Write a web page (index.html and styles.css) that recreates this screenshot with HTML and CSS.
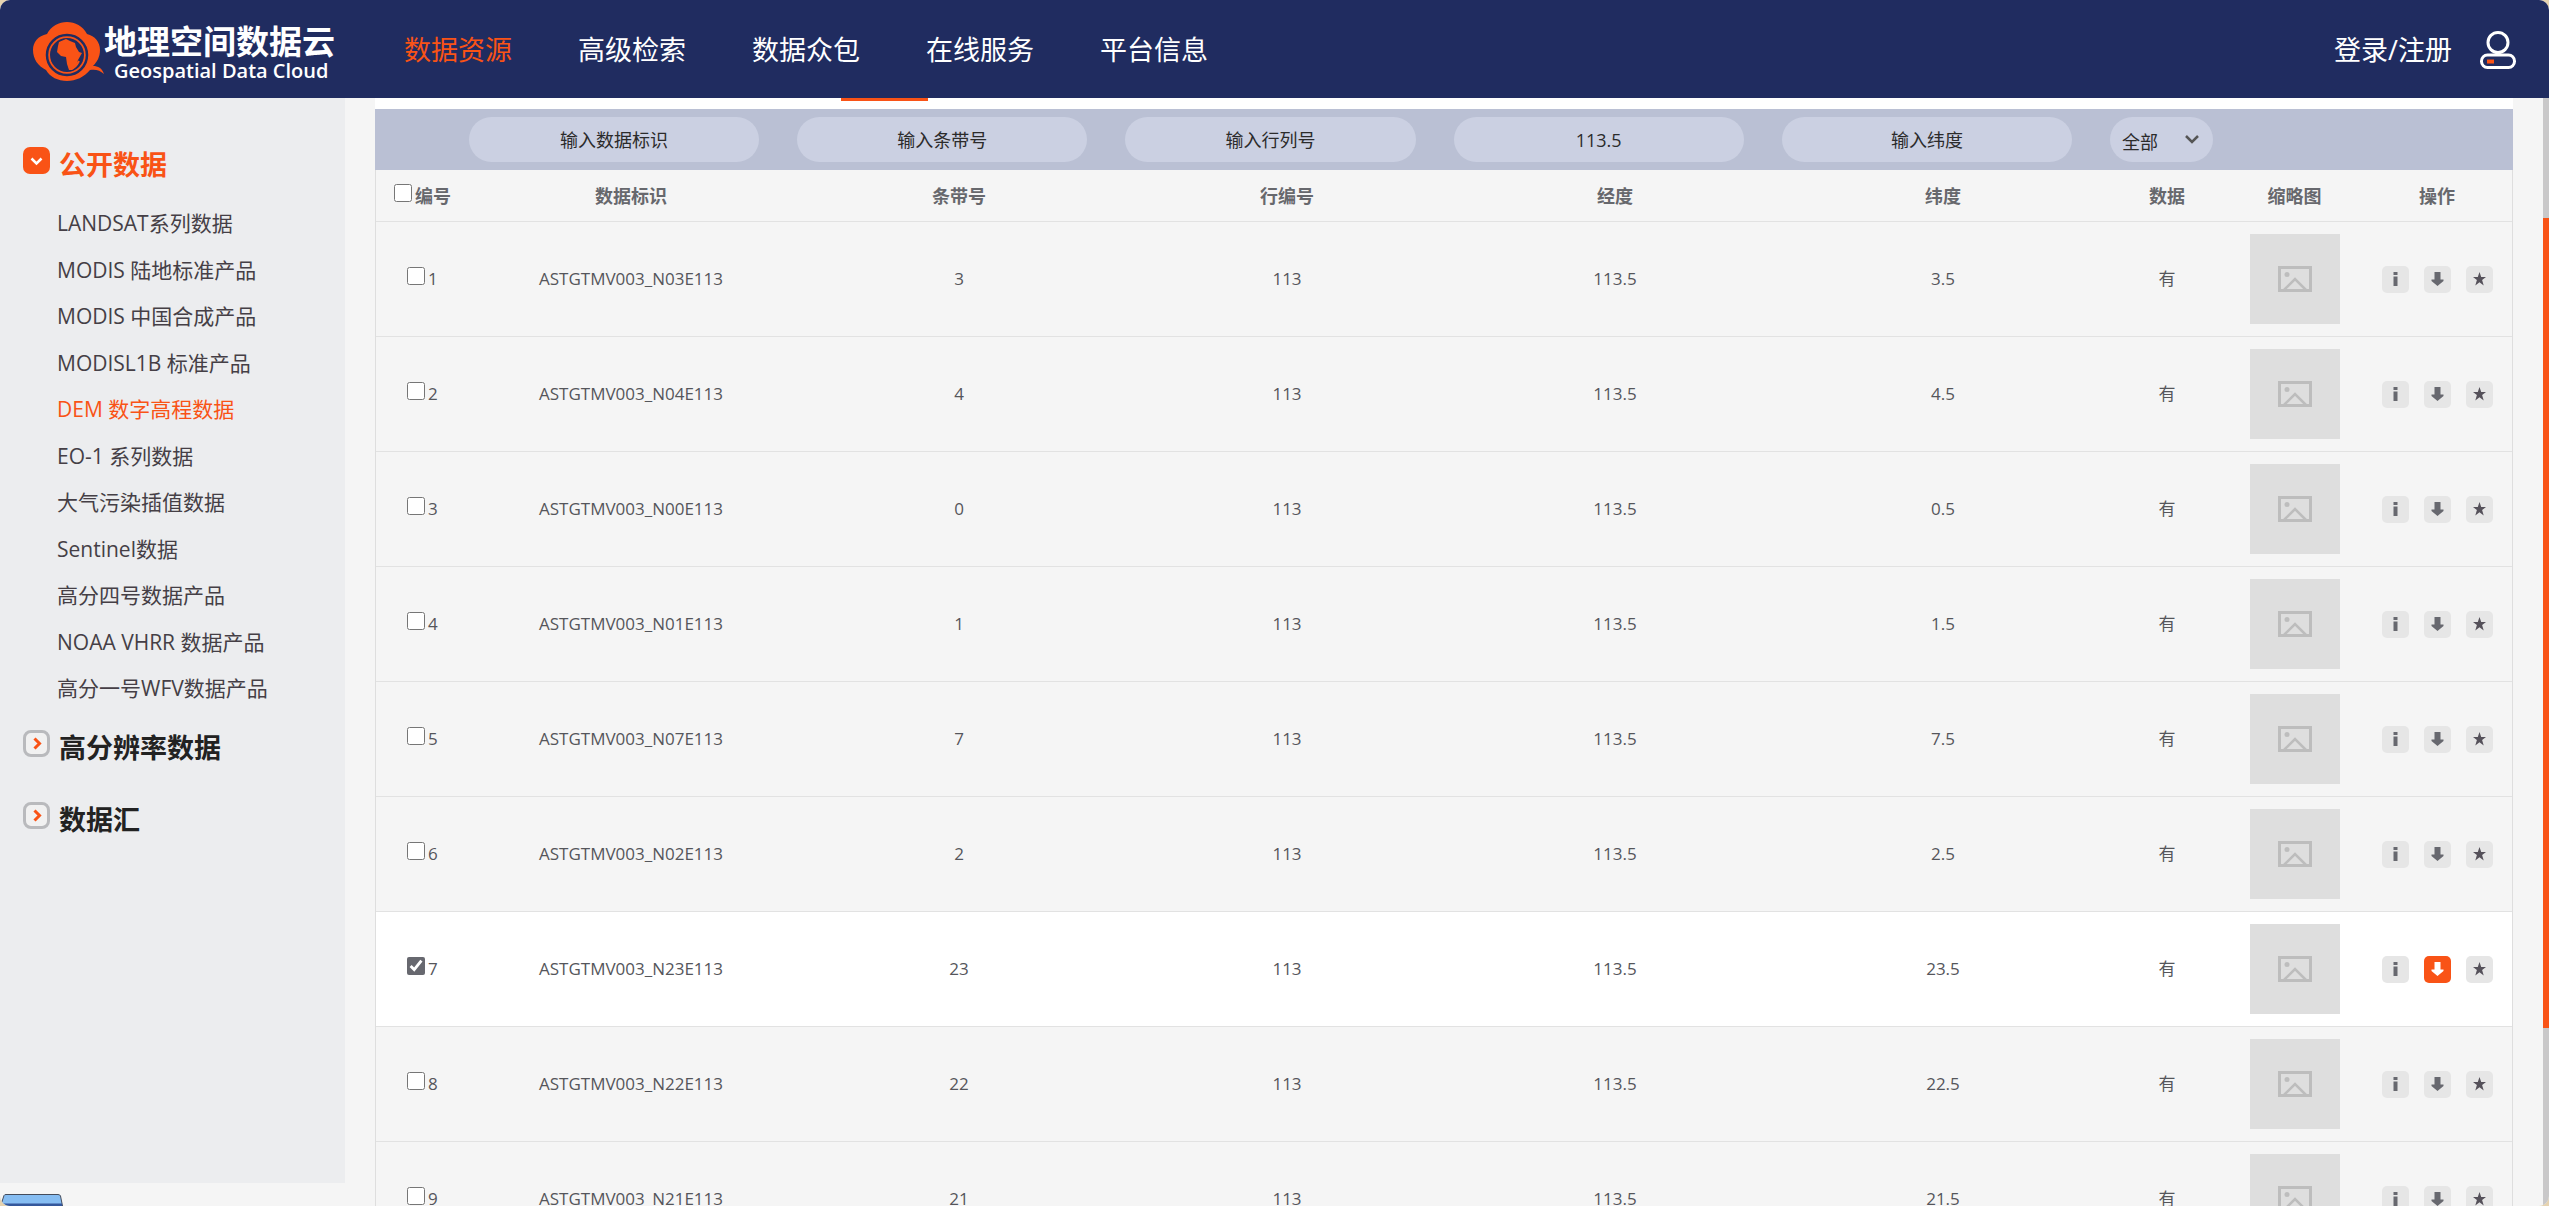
FILE: index.html
```html
<!DOCTYPE html>
<html lang="zh-CN">
<head>
<meta charset="utf-8">
<meta name="viewport" content="width=device-width, initial-scale=1">
<title>地理空间数据云</title>
<link rel="stylesheet" href="styles.css">
</head>
<body>
<svg class="sprite" aria-hidden="true">
  <symbol id="picture" viewBox="0 0 34 26"><rect x="1.5" y="1.5" width="31" height="23" fill="none" stroke="#bdbdbd" stroke-width="3"/><circle cx="9" cy="8.500" r="2.500" fill="#bdbdbd"/><path d="M5.500 24.500 17 13l11.500 11.500" fill="none" stroke="#bdbdbd" stroke-width="2.500"/></symbol>
  <symbol id="info" viewBox="0 0 27 27"><path d="M11.500 6h4v3h-4zM11.500 10.500h4V20h-4z"/></symbol>
  <symbol id="down" viewBox="0 0 27 27"><path d="M10.500 6h6v7.500h3V15l-6 5-6-5v-1.500h3z"/></symbol>
  <symbol id="star" viewBox="0 0 27 27"><path d="m13.500 6 1.700 5H20l-3.900 3.100 1.600 5.400-4.200-3.200-4.200 3.200 1.600-5.400L7 11h4.800z" fill="#55515a"/></symbol>
  <symbol id="open" viewBox="0 0 27 27"><rect width="27" height="27" rx="7" fill="#f95316"/><path d="m8.500 11.500 5 5 5-5" fill="none" stroke="#fff" stroke-width="2.500"/></symbol>
  <symbol id="closed" viewBox="0 0 27 27"><rect x="1.500" y="1.500" width="24" height="24" rx="6.500" fill="#f1f1f1" stroke="#b9babd" stroke-width="3"/><path d="m11.500 8.500 5 5-5 5" fill="none" stroke="#f95316" stroke-width="3"/></symbol>
</svg>
<div class="window">
  <header class="topbar">
    <a class="logo" href="#">
      <svg class="logo-mark" viewBox="0 0 71 60" aria-hidden="true">
        <path d="M14 12C18 4 26 0 34 0s16 4 20 12c8 2 13 8 13 16 0 7-3 12-7 16 5 0 9 2 11 8-4-4-9-5-14-4-6 7-14 11-23 11S17 55 13 48C5 44 0 37 0 28c0-8 5-14 14-16z" fill="#f95316"/>
        <circle cx="34" cy="33" r="20" fill="none" stroke="#202c60" stroke-width="2.500"/>
        <circle cx="34" cy="33" r="17" fill="#202c60"/>
        <path d="M26 20l7-3 4 2 5 2 1 4 3 5 3 1-4 7-2 6-4 4h-3l-2-6-1-7-5-1-4-4 1-6z" fill="#f95316"/>
        <path d="M38 47c4-1 6-4 8-8" fill="none" stroke="#f95316" stroke-width="2"/>
      </svg>
      <span class="logo-text"><span class="logo-cn">地理空间数据云</span><span class="logo-en">Geospatial Data Cloud</span></span>
    </a>
    <nav class="nav">
      <a class="active" href="#">数据资源</a>
      <a href="#">高级检索</a>
      <a href="#">数据众包</a>
      <a href="#">在线服务</a>
      <a href="#">平台信息</a>
    </nav>
    <a class="login" href="#">登录/注册
      <svg width="36" height="38" viewBox="0 0 36 38" aria-hidden="true"><ellipse cx="18" cy="11.500" rx="10" ry="10" fill="none" stroke="#fff" stroke-width="3"/><rect x="1.500" y="24" width="33" height="12.500" rx="6" fill="none" stroke="#fff" stroke-width="3"/><rect x="7" y="28.500" width="7" height="4" fill="#f95316"/></svg>
    </a>
  </header>
  <div class="body">
    <aside class="sidebar">
      <h2 class="group open"><svg><use href="#open"/></svg><a href="#">公开数据</a></h2>
      <ul class="products">
        <li><a href="#">LANDSAT系列数据</a></li>
        <li><a href="#">MODIS 陆地标准产品</a></li>
        <li><a href="#">MODIS 中国合成产品</a></li>
        <li><a href="#">MODISL1B 标准产品</a></li>
        <li><a class="active" href="#">DEM 数字高程数据</a></li>
        <li><a href="#">EO-1 系列数据</a></li>
        <li><a href="#">大气污染插值数据</a></li>
        <li><a href="#">Sentinel数据</a></li>
        <li><a href="#">高分四号数据产品</a></li>
        <li><a href="#">NOAA VHRR 数据产品</a></li>
        <li><a href="#">高分一号WFV数据产品</a></li>
      </ul>
      <h2 class="group"><svg><use href="#closed"/></svg><a href="#">高分辨率数据</a></h2>
      <h2 class="group"><svg><use href="#closed"/></svg><a href="#">数据汇</a></h2>
    </aside>
    <main class="content">
      <div class="tab-strip"><span class="tab-marker"></span></div>
      <form class="filters">
        <input type="text" class="first" aria-label="数据标识" placeholder="输入数据标识">
        <input type="text" aria-label="条带号" placeholder="输入条带号">
        <input type="text" aria-label="行列号" placeholder="输入行列号">
        <input type="text" aria-label="经度" value="113.5">
        <input type="text" aria-label="纬度" placeholder="输入纬度">
        <div class="picker">
          <select aria-label="数据"><option>全部</option></select>
          <svg viewBox="0 0 14 9" aria-hidden="true"><path d="m1 1 6 6 6-6" fill="none" stroke="#555" stroke-width="2.500"/></svg>
        </div>
      </form>
      <table class="results">
        <colgroup><col class="c-no"><col><col><col><col><col><col class="c-data"><col class="c-thumb"><col class="c-act"></colgroup>
        <thead>
          <tr><th><label><input type="checkbox">编号</label></th><th>数据标识</th><th>条带号</th><th>行编号</th><th>经度</th><th>纬度</th><th>数据</th><th>缩略图</th><th>操作</th></tr>
        </thead>
        <tbody>
          <tr><td><label><input type="checkbox">1</label></td><td>ASTGTMV003_N03E113</td><td>3</td><td>113</td><td>113.5</td><td>3.5</td><td>有</td><td><span class="thumb"><svg><use href="#picture"/></svg></span></td><td><div class="actions"><button type="button" aria-label="详情"><svg><use href="#info"/></svg></button><button type="button" aria-label="下载"><svg><use href="#down"/></svg></button><button type="button" aria-label="收藏"><svg><use href="#star"/></svg></button></div></td></tr>
          <tr><td><label><input type="checkbox">2</label></td><td>ASTGTMV003_N04E113</td><td>4</td><td>113</td><td>113.5</td><td>4.5</td><td>有</td><td><span class="thumb"><svg><use href="#picture"/></svg></span></td><td><div class="actions"><button type="button" aria-label="详情"><svg><use href="#info"/></svg></button><button type="button" aria-label="下载"><svg><use href="#down"/></svg></button><button type="button" aria-label="收藏"><svg><use href="#star"/></svg></button></div></td></tr>
          <tr><td><label><input type="checkbox">3</label></td><td>ASTGTMV003_N00E113</td><td>0</td><td>113</td><td>113.5</td><td>0.5</td><td>有</td><td><span class="thumb"><svg><use href="#picture"/></svg></span></td><td><div class="actions"><button type="button" aria-label="详情"><svg><use href="#info"/></svg></button><button type="button" aria-label="下载"><svg><use href="#down"/></svg></button><button type="button" aria-label="收藏"><svg><use href="#star"/></svg></button></div></td></tr>
          <tr><td><label><input type="checkbox">4</label></td><td>ASTGTMV003_N01E113</td><td>1</td><td>113</td><td>113.5</td><td>1.5</td><td>有</td><td><span class="thumb"><svg><use href="#picture"/></svg></span></td><td><div class="actions"><button type="button" aria-label="详情"><svg><use href="#info"/></svg></button><button type="button" aria-label="下载"><svg><use href="#down"/></svg></button><button type="button" aria-label="收藏"><svg><use href="#star"/></svg></button></div></td></tr>
          <tr><td><label><input type="checkbox">5</label></td><td>ASTGTMV003_N07E113</td><td>7</td><td>113</td><td>113.5</td><td>7.5</td><td>有</td><td><span class="thumb"><svg><use href="#picture"/></svg></span></td><td><div class="actions"><button type="button" aria-label="详情"><svg><use href="#info"/></svg></button><button type="button" aria-label="下载"><svg><use href="#down"/></svg></button><button type="button" aria-label="收藏"><svg><use href="#star"/></svg></button></div></td></tr>
          <tr><td><label><input type="checkbox">6</label></td><td>ASTGTMV003_N02E113</td><td>2</td><td>113</td><td>113.5</td><td>2.5</td><td>有</td><td><span class="thumb"><svg><use href="#picture"/></svg></span></td><td><div class="actions"><button type="button" aria-label="详情"><svg><use href="#info"/></svg></button><button type="button" aria-label="下载"><svg><use href="#down"/></svg></button><button type="button" aria-label="收藏"><svg><use href="#star"/></svg></button></div></td></tr>
          <tr class="selected"><td><label><input type="checkbox" checked>7</label></td><td>ASTGTMV003_N23E113</td><td>23</td><td>113</td><td>113.5</td><td>23.5</td><td>有</td><td><span class="thumb"><svg><use href="#picture"/></svg></span></td><td><div class="actions"><button type="button" aria-label="详情"><svg><use href="#info"/></svg></button><button type="button" class="hot" aria-label="下载"><svg><use href="#down"/></svg></button><button type="button" aria-label="收藏"><svg><use href="#star"/></svg></button></div></td></tr>
          <tr><td><label><input type="checkbox">8</label></td><td>ASTGTMV003_N22E113</td><td>22</td><td>113</td><td>113.5</td><td>22.5</td><td>有</td><td><span class="thumb"><svg><use href="#picture"/></svg></span></td><td><div class="actions"><button type="button" aria-label="详情"><svg><use href="#info"/></svg></button><button type="button" aria-label="下载"><svg><use href="#down"/></svg></button><button type="button" aria-label="收藏"><svg><use href="#star"/></svg></button></div></td></tr>
          <tr><td><label><input type="checkbox">9</label></td><td>ASTGTMV003_N21E113</td><td>21</td><td>113</td><td>113.5</td><td>21.5</td><td>有</td><td><span class="thumb"><svg><use href="#picture"/></svg></span></td><td><div class="actions"><button type="button" aria-label="详情"><svg><use href="#info"/></svg></button><button type="button" aria-label="下载"><svg><use href="#down"/></svg></button><button type="button" aria-label="收藏"><svg><use href="#star"/></svg></button></div></td></tr>
        </tbody>
      </table>
    </main>
    <div class="scroll-track"><div class="scroll-thumb"></div></div>
  </div>
  <svg class="dock" viewBox="0 0 63 12" aria-hidden="true"><path d="M.5 12 4 1.500Q4.500.5 6 .5h52q2 0 2.500 1.500L62.500 12z" fill="#86bdf2" stroke="#444c5c"/><path d="M1 9.500h61V12H1z" fill="#34579b"/></svg>
</div>
</body>
</html>
```
FILE: styles.css
```css
* { box-sizing: border-box; }

body {
  margin: 0;
  background: #e6d3b0;
  color: #55565b;
  font: 18px/24px "Open Sans", "Noto Sans CJK SC", sans-serif;
}

a { color: inherit; text-decoration: none; }

.sprite { display: none; }

.window {
  position: relative;
  display: flex;
  flex-direction: column;
  height: 100vh;
  overflow: hidden;
  border-radius: 10px;
  background: #f5f5f5;
}

.topbar {
  display: flex;
  flex: none;
  align-items: center;
  height: 98px;
  padding: 2px 33px 0 33px;
  background: #202c60;
  color: #fff;
  font-size: 27px;
  line-height: 40px;
}

.logo { display: flex; align-items: center; width: 371px; padding-top: 4px; }
.logo-mark { width: 71px; height: 60px; }
.logo-text { display: flex; flex-direction: column; padding-top: 4px; white-space: nowrap; }
.logo-cn { font-size: 33px; font-weight: 700; line-height: 34px; }
.logo-en { padding-left: 10px; font-size: 20px; font-weight: 600; line-height: 24px; }

.nav { display: flex; gap: 66px; }
.nav .active { color: #f95316; }

.login { display: flex; align-items: center; gap: 28px; margin-left: auto; }

.body { display: flex; flex: 1; min-height: 0; }

.sidebar {
  flex: none;
  width: 345px;
  margin-bottom: 23px;
  padding: 49px 0 0 23px;
  background: #ecedef;
}

.group {
  display: flex;
  gap: 9px;
  height: 72px;
  margin: 0;
  color: #222;
  font-size: 27px;
  line-height: 36px;
}
.group svg { width: 27px; height: 27px; }
.group.open { height: 54px; color: #f95316; }

.products {
  display: grid;
  grid-auto-rows: 1fr;
  height: 512px;
  margin: 0 0 17px;
  padding: 0 0 0 34px;
  color: #453f46;
  font-size: 21px;
  line-height: 44px;
  list-style: none;
}
.products .active { color: #f95316; }

.content { flex: 1; min-width: 0; padding: 0 30px; }

.tab-strip { height: 11px; background: #fff; }
.tab-marker { display: block; width: 87px; height: 3px; margin-left: 466px; background: #f95316; }

.filters {
  display: grid;
  grid-template-columns: 91px repeat(5, 1fr) 120px 135px 151px;
  align-items: center;
  height: 61px;
  background: #bac0d4;
}

.filters input,
.filters select {
  width: 100%;
  height: 45px;
  padding: 0;
  border: 0;
  border-radius: 23px;
  background: #cbd0e2;
  color: #2b2b2b;
  font: inherit;
  text-align: center;
}
.filters input { width: auto; margin: 0 35px 0 3px; }
.filters .first { grid-column: 2; }
.filters ::placeholder { color: #2b2b2b; opacity: 1; }

.picker { position: relative; margin: 0 14px 0 3px; }
.picker select { appearance: none; padding: 4px 12px 0; text-align: left; }
.picker svg { position: absolute; top: 18px; right: 14px; width: 14px; height: 9px; }

.results {
  width: 100%;
  table-layout: fixed;
  border-collapse: separate;
  border-spacing: 0;
  border: solid #dedede;
  border-width: 0 1px;
  text-align: center;
}
.results th,
.results td { padding: 0; border-bottom: 1px solid #e2e2e2; }
.results th { height: 52px; color: #67686d; }
.results td { height: 115px; font-size: 17px; }
.c-no { width: 91px; }
.c-data { width: 120px; }
.c-thumb { width: 135px; }
.c-act { width: 150px; }

.results label { display: flex; align-items: flex-start; gap: 3px; padding-left: 31px; }
.results th label { padding-left: 18px; }
.results input { width: 18px; height: 18px; margin: 0; accent-color: #67686f; }

.selected { background: #fff; }

.thumb {
  display: flex;
  align-items: center;
  justify-content: center;
  width: 90px;
  height: 90px;
  margin: 0 auto;
  background: #dedede;
}
.thumb svg { width: 34px; height: 26px; }

.actions { display: flex; justify-content: center; gap: 15px; }
.actions button {
  width: 27px;
  height: 27px;
  padding: 0;
  border: 0;
  border-radius: 5px;
  background: #e6e6e6;
  color: #67686f;
}
.actions .hot { background: #f95316; color: #fff; }
.actions svg { display: block; width: 27px; height: 27px; fill: currentColor; }

.scroll-track { flex: none; width: 6px; padding-top: 120px; background: #c9c8c9; }
.scroll-thumb { height: 82%; background: #f95316; }

.dock { position: absolute; bottom: 0; left: 0; width: 63px; height: 12px; }
```
